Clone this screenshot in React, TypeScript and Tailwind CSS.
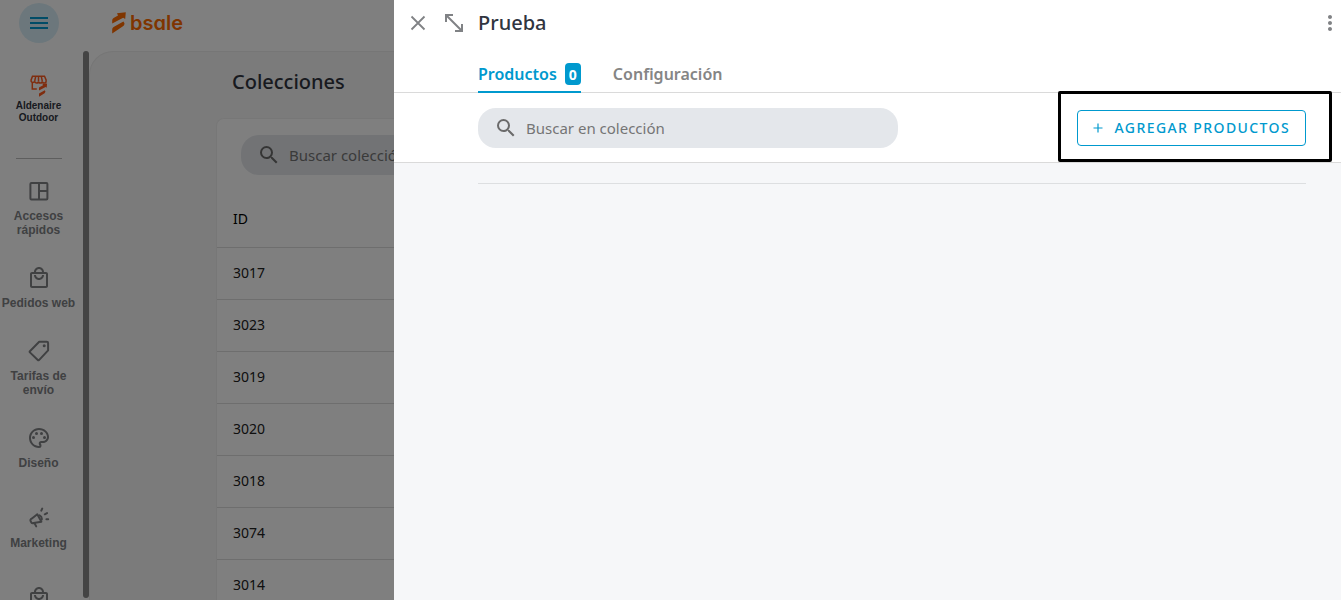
import React from "react";
import { MdSearch, MdOutlinePalette, MdOutlineLocalMall, MdMoreVert } from "react-icons/md";

const collectionIds = [3017, 3023, 3019, 3020, 3018, 3074, 3014];

function BsaleMark({ className }: { className?: string }) {
  return (
    <svg viewBox="0 0 14 22" className={className} fill="currentColor" aria-hidden="true">
      <path d="M.2 11.6V8.4Q.2 6.7 1.6 5.9L6 3.4 5 1.2 13.8.2 13.2 7 11.2 5.8Z" />
      <path d="M.2 21.4V17.4Q.2 15.9 1.6 15.1L11.4 9.5Q13.2 11 12.2 13Q11.8 13.9 10.6 14.6Z" />
    </svg>
  );
}

function StoreIcon() {
  return (
    <svg viewBox="0 0 18 22" className="h-[22px] w-[18px]" fill="none" stroke="currentColor" strokeWidth="1.5" aria-hidden="true">
      <path d="M2.5 1.2h12l1.6 3.8v1.2a1.9 1.9 0 0 1-3.8 0 1.9 1.9 0 0 1-3.8 0 1.9 1.9 0 0 1-3.8 0 1.9 1.9 0 0 1-3.6 0V5zM5.8 1.2 4.7 6M8.5 1.2V6M11.2 1.2 12.3 6M2.3 8v6h4.5" />
      <path d="M9 15.6v-3l4-2.3-.5-1.2 4.6-.6-.4 4.3-1.1-.8zM9 21.8v-3.2l5.8-3.3q1.5 1.6-.2 3z" fill="currentColor" stroke="none" />
    </svg>
  );
}

function DashboardIcon() {
  return (
    <svg viewBox="0 0 24 24" className="size-6" fill="none" stroke="currentColor" strokeWidth="2" aria-hidden="true">
      <rect x="3.4" y="4" width="17" height="16.4" rx="1" />
      <path d="M12 4v16.4M12 12h8.4" />
    </svg>
  );
}

function TagIcon() {
  return (
    <svg viewBox="0 0 24 24" className="size-6" fill="none" stroke="currentColor" strokeWidth="2" strokeLinejoin="round" aria-hidden="true">
      <path d="M12.2 2.8h7.6q1.3 0 1.3 1.3v7.3L12 21.1Q11.4 21.6 10.8 21L2.9 13.4Q2.3 12.8 2.9 12.2z" />
      <circle cx="17.2" cy="6.8" r="1.5" fill="currentColor" stroke="none" />
    </svg>
  );
}

function MegaphoneIcon() {
  return (
    <svg viewBox="0 0 24 24" className="size-6" fill="none" stroke="currentColor" strokeWidth="2" strokeLinecap="round" strokeLinejoin="round" aria-hidden="true">
      <path d="M10.3 8.2 4.6 12.7Q2.8 13.6 3.7 15.3L4.4 16.6Q5.1 17.5 6.6 17L14.4 15.7zM7.4 17l1.8 3.4" />
      <path d="M12.6 9.4q2.5 1.2 2.2 4M14.3 4.6l.9-2M17.8 8.3l2.2-1.2M19.4 13.2h1.8" />
    </svg>
  );
}

function ExpandIcon() {
  return (
    <svg viewBox="0 0 20 20" className="size-5" fill="none" stroke="currentColor" strokeWidth="2" aria-hidden="true">
      <path d="M2 9V2h7M2 2l16 16M11 18h7v-7" />
    </svg>
  );
}

function CloseIcon() {
  return (
    <svg viewBox="0 0 16 16" className="size-4" fill="none" stroke="currentColor" strokeWidth="1.8" aria-hidden="true">
      <path d="M1.5 1.5l13 13M14.5 1.5l-13 13" />
    </svg>
  );
}

function NavItem({ icon, label }: { icon: React.ReactNode; label: string }) {
  return (
    <a href="#" className="flex w-full flex-col items-center gap-1.5 text-center text-[12px] leading-[14px] font-bold text-[#808285]">
      {icon}
      <span>{label}</span>
    </a>
  );
}

function SearchField({ id, label, className }: { id: string; label: string; className: string }) {
  return (
    <div className={`flex h-10 items-center gap-2 rounded-[18px] bg-[#e4e7eb] pl-4 ${className}`}>
      <MdSearch className="size-6 shrink-0 text-[#6b6b6b]" aria-hidden="true" />
      <input
        id={id}
        type="text"
        aria-label={label}
        placeholder={label}
        className="h-full min-w-0 flex-1 bg-transparent text-[15px] text-[#757575] outline-none placeholder:text-[#757575]"
      />
    </div>
  );
}

function Sidebar() {
  return (
    <div className="flex w-[89px] shrink-0 justify-between overflow-hidden">
      <nav className="flex w-[77px] flex-col items-center font-['Liberation_Sans',sans-serif]">
        <a href="#" className="mt-6 flex flex-col items-center gap-[3px] text-center text-[10px] leading-3 font-bold text-[#30353f]">
          <span className="text-[#ff5a1f]"><StoreIcon /></span>
          <span className="w-14">Aldenaire Outdoor</span>
        </a>
        <hr className="mt-[34px] h-px w-[46px] shrink-0 border-0 bg-[#bdbdbd]" />
        <div className="mt-5 flex w-full flex-col gap-[29px]">
          <NavItem icon={<DashboardIcon />} label="Accesos rápidos" />
          <NavItem icon={<MdOutlineLocalMall className="size-6" />} label="Pedidos web" />
          <NavItem icon={<TagIcon />} label="Tarifas de envío" />
          <NavItem icon={<MdOutlinePalette className="size-6" />} label="Diseño" />
        </div>
        <div className="mt-9 flex w-full flex-col gap-9">
          <NavItem icon={<MegaphoneIcon />} label="Marketing" />
          <a href="#" aria-label="Productos" className="flex justify-center text-[#808285]">
            <MdOutlineLocalMall className="size-6" />
          </a>
        </div>
      </nav>
      <div className="mb-0.5 w-1.5 rounded-full bg-[#888888]" />
    </div>
  );
}

function CollectionsPage() {
  return (
    <main className="min-w-0 flex-1 overflow-hidden rounded-tl-[24px] border-t border-l border-[#ececec] bg-[#f6f6f6] pl-[126px]">
      <h1 className="mt-4 ml-4 text-[20px] leading-7 font-medium text-[#30353f]">Colecciones</h1>
      <section className="mt-[22px] rounded-tl-lg border-t border-l border-[#efefef] bg-white">
        <SearchField id="collections-search" label="Buscar colección" className="mt-4 ml-6 w-[420px]" />
        <table className="mt-4 w-full text-left text-[14px]">
          <thead>
            <tr className="h-14 border-b border-[#dcdcdc]">
              <th scope="col" className="pl-4 font-normal text-black">ID</th>
            </tr>
          </thead>
          <tbody>
            {collectionIds.map((id) => (
              <tr key={id} className="h-[52px] border-b border-[#dcdcdc]">
                <td className="pb-0.5 pl-4 text-[#202020]">{id}</td>
              </tr>
            ))}
          </tbody>
        </table>
      </section>
    </main>
  );
}

function CollectionDrawer() {
  return (
    <aside role="dialog" aria-label="Prueba" className="absolute inset-y-0 right-0 left-[394px] flex flex-col bg-[#f6f7f9]">
      <header className="flex h-[46px] items-center bg-white pl-4 text-[#808285]">
        <button type="button" aria-label="Cerrar" className="mr-[18px]"><CloseIcon /></button>
        <button type="button" aria-label="Expandir" className="mr-3.5"><ExpandIcon /></button>
        <h2 className="flex-1 text-[20px] leading-7 font-medium text-[#30353f]">Prueba</h2>
        <button type="button" aria-label="Más opciones" className="-mr-px"><MdMoreVert className="size-6" /></button>
      </header>
      <div role="tablist" className="flex h-[47px] items-end gap-8 border-b border-[#dadada] bg-white pl-[84px] text-[16px] font-semibold">
        <button type="button" role="tab" aria-selected="true" className="-mb-px flex h-9 items-center gap-2 border-b-2 border-[#0099ce] text-[#0099ce]">
          Productos
          <span className="flex h-[22px] w-4 items-center justify-center rounded bg-[#0099ce] text-[14px] font-bold text-white">0</span>
        </button>
        <button type="button" role="tab" aria-selected="false" className="-mb-px flex h-9 items-center border-b-2 border-transparent text-[#858585]">
          Configuración
        </button>
      </div>
      <div className="flex h-[70px] items-center justify-between border-b border-[#dadada] bg-white pr-[35px] pl-[84px]">
        <SearchField id="products-search" label="Buscar en colección" className="w-[420px]" />
        <div className="relative">
          <button type="button" className="flex h-9 items-center gap-3 rounded border border-[#0099ce] px-[15px] text-[14px] font-medium tracking-widest text-[#0099ce] uppercase">
            <svg viewBox="0 0 10 10" className="size-2.5" stroke="currentColor" strokeWidth="1.2" aria-hidden="true">
              <path d="M5 .5v9M.5 5h9" />
            </svg>
            Agregar productos
          </button>
          <div className="pointer-events-none absolute -top-[19px] -right-[26px] -bottom-4 -left-[19px] rounded-xs border-3 border-black" />
        </div>
      </div>
      <hr className="mt-5 mr-[35px] ml-[84px] border-[#dddfe1]" />
    </aside>
  );
}

export default function App() {
  return (
    <div className="relative flex h-screen flex-col overflow-hidden bg-white font-['Noto_Sans',sans-serif]">
      <header className="flex h-[51px] shrink-0 items-start pt-[3px] pl-[19px]">
        <button type="button" aria-label="Menú" className="flex size-10 items-center justify-center rounded-full bg-[#d9eff8] text-[#0099ce]">
          <svg viewBox="0 0 18 12" className="h-3 w-[18px]" fill="currentColor" aria-hidden="true">
            <path d="M0 0h18v2H0zM0 5h18v2H0zM0 10h18v2H0z" />
          </svg>
        </button>
        <a href="#" className="ml-[53px] flex h-10 items-center gap-1 text-[#ff6a00]">
          <BsaleMark className="h-[22px] w-3.5" />
          <span className="font-['Inter',sans-serif] text-[20px] leading-none font-semibold [font-feature-settings:'cv11','ss03']">bsale</span>
        </a>
      </header>
      <div className="flex min-h-0 flex-1">
        <Sidebar />
        <CollectionsPage />
      </div>
      <div className="absolute inset-0 bg-black/50" />
      <CollectionDrawer />
    </div>
  );
}
